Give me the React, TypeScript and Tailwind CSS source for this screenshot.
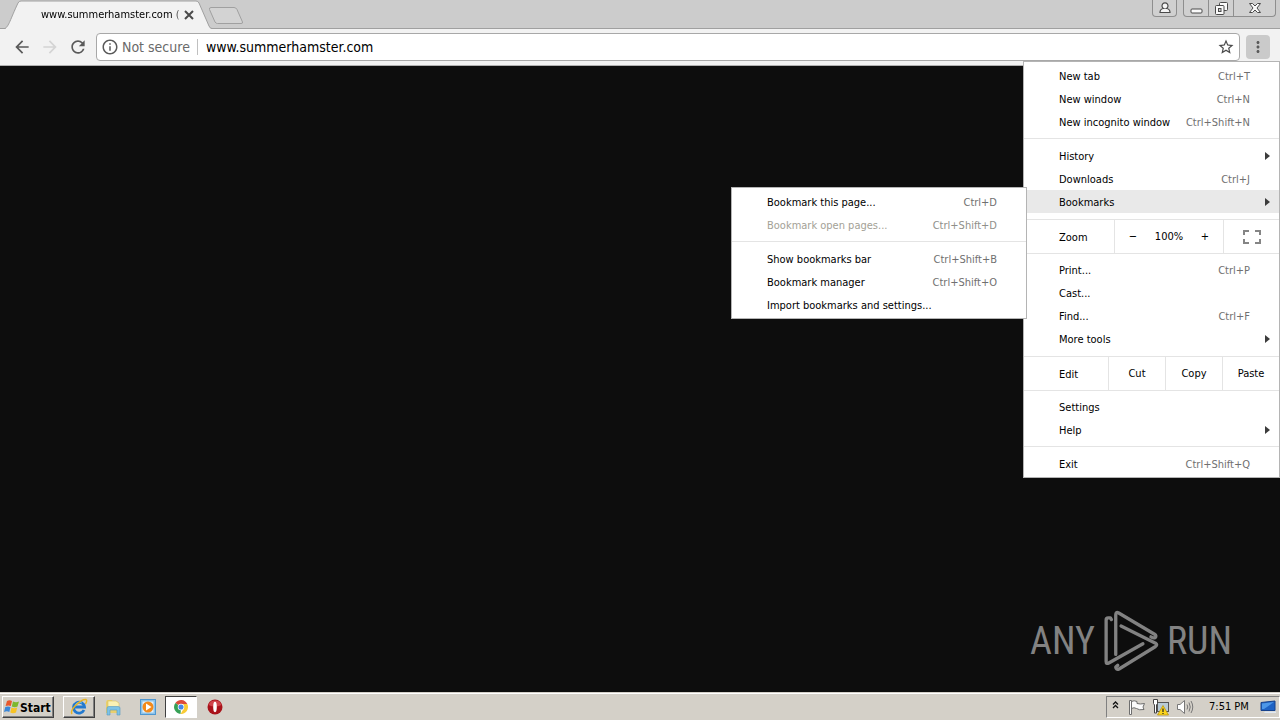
import type { ReactNode } from "react";
import {
  MdArrowBack,
  MdArrowForward,
  MdInfoOutline,
  MdMoreVert,
  MdRefresh,
  MdStarBorder,
} from "react-icons/md";

function MenuRow({
  label,
  shortcut,
  arrow,
  active,
  disabled,
}: {
  label: string;
  shortcut?: string;
  arrow?: boolean;
  active?: boolean;
  disabled?: boolean;
}) {
  return (
    <button
      type="button"
      role="menuitem"
      disabled={disabled}
      className={`flex h-[23px] w-full items-center justify-between pl-[35px] text-left whitespace-nowrap ${
        arrow ? "pr-[9px]" : "pr-[29px]"
      } ${active ? "bg-[#e9e9e9]" : ""} ${disabled ? "text-[#a3a196]" : "text-black"}`}
    >
      <span className="pt-[3px]">{label}</span>
      {shortcut && (
        <span className={`pt-[3px] ${disabled ? "text-[#8f8f8a]" : "text-[#707070]"}`}>{shortcut}</span>
      )}
      {arrow && (
        <svg viewBox="0 0 5 8" className="h-2 w-[5px]" fill="#3c3c3c" aria-hidden="true">
          <path d="M0 0 5 4 0 8z" />
        </svg>
      )}
    </button>
  );
}

function Separator() {
  return <div role="separator" className="my-[5px] h-px bg-[#e4e4e4]" />;
}

function BookmarksMenu() {
  return (
    <div
      role="menu"
      aria-label="Bookmarks"
      className="absolute -top-[3px] right-full -mr-[3px] w-[296px] border border-[#b4b4b4] bg-white py-0.5"
    >
      <MenuRow label="Bookmark this page..." shortcut="Ctrl+D" />
      <MenuRow label="Bookmark open pages..." shortcut="Ctrl+Shift+D" disabled />
      <Separator />
      <MenuRow label="Show bookmarks bar" shortcut="Ctrl+Shift+B" />
      <MenuRow label="Bookmark manager" shortcut="Ctrl+Shift+O" />
      <MenuRow label="Import bookmarks and settings..." />
    </div>
  );
}

function ControlRow({ children }: { children: ReactNode }) {
  return (
    <div className="mt-1.5 mb-1 flex h-[35px] divide-x divide-[#e4e4e4] border-y border-[#e4e4e4]">
      {children}
    </div>
  );
}

function MainMenu() {
  return (
    <div
      role="menu"
      aria-label="Browser menu"
      className="absolute top-[61px] right-0 z-10 w-[257px] border border-[#b4b4b4] bg-white py-0.5 text-[11px]"
    >
      <MenuRow label="New tab" shortcut="Ctrl+T" />
      <MenuRow label="New window" shortcut="Ctrl+N" />
      <MenuRow label="New incognito window" shortcut="Ctrl+Shift+N" />
      <Separator />
      <MenuRow label="History" arrow />
      <MenuRow label="Downloads" shortcut="Ctrl+J" />
      <div className="relative">
        <MenuRow label="Bookmarks" arrow active />
        <BookmarksMenu />
      </div>
      <ControlRow>
        <span className="flex w-[91px] items-center pt-[3px] pl-[35px]">Zoom</span>
        <div className="flex flex-1 items-center justify-between px-3 pt-0.5">
          <button type="button" aria-label="Zoom out" className="w-3">
            −
          </button>
          <span>100%</span>
          <button type="button" aria-label="Zoom in" className="w-3">
            +
          </button>
        </div>
        <button type="button" aria-label="Full screen" className="flex w-[55px] items-center justify-center">
          <svg viewBox="0 0 18 14" className="h-3.5 w-[18px]" fill="none" stroke="#858585" strokeWidth="2" aria-hidden="true">
            <path d="M1 5V1h5M12 1h5v4M17 9v4h-5M6 13H1V9" />
          </svg>
        </button>
      </ControlRow>
      <MenuRow label="Print..." shortcut="Ctrl+P" />
      <MenuRow label="Cast..." />
      <MenuRow label="Find..." shortcut="Ctrl+F" />
      <MenuRow label="More tools" arrow />
      <ControlRow>
        <span className="flex flex-1 items-center pt-[3px] pl-[35px]">Edit</span>
        <button type="button" className="w-[57px] pt-0.5">Cut</button>
        <button type="button" className="w-[57px] pt-0.5">Copy</button>
        <button type="button" className="w-14 pt-0.5">Paste</button>
      </ControlRow>
      <MenuRow label="Settings" />
      <MenuRow label="Help" arrow />
      <Separator />
      <MenuRow label="Exit" shortcut="Ctrl+Shift+Q" />
    </div>
  );
}

function TabStrip() {
  return (
    <div className="flex h-[29px] items-start justify-between border-b border-[#a0a0a0] bg-[#cccccc]">
      <div className="flex items-start">
        <div className="relative h-[29px] w-[216px]">
          <svg viewBox="0 0 216 29" className="absolute inset-0 h-[29px] w-[216px]" aria-hidden="true">
            <path d="M5 29C9 26 10 20 18 3Q19 1 21 1H196Q198 1 199 3L209 26Q210 29 212 29z" fill="#f2f2f2" />
            <path d="M5 28.500C9 26 10 20 18 3Q19 1 21 1H196Q198 1 199 3L209 26Q210 28.500 212 28.500" fill="none" stroke="#a0a0a0" />
          </svg>
          <div className="relative flex h-[29px] items-center pl-[41px]">
            <span className="w-[141px] pt-0.5 text-[11px] whitespace-nowrap text-black [mask-image:linear-gradient(to_right,black_92%,#0006)]">
              www.summerhamster.com (
            </span>
            <button type="button" aria-label="Close tab" className="ml-0.5 pt-px">
              <svg viewBox="0 0 10 10" className="size-[10px]" stroke="#4a4a4a" strokeWidth="2" aria-hidden="true">
                <path d="M1 1 9 9M9 1 1 9" />
              </svg>
            </button>
          </div>
        </div>
        <button type="button" aria-label="New tab" className="-ml-2 pt-[7px]">
          <svg viewBox="0 0 36 18" className="h-[18px] w-9" fill="#d3d3d3" stroke="#a0a0a0" aria-hidden="true">
            <path d="M3 .5H26Q28 .5 29 2.500L34.500 15Q35 16.500 33 16.500H9.500Q8 16.500 7 15L1.500 2.500Q1 .5 3 .5z" />
          </svg>
        </button>
      </div>
      <div className="flex gap-1.5 pr-1">
        <button
          type="button"
          aria-label="User profile"
          className="flex h-[17px] w-[25px] justify-center rounded-b border border-t-0 border-[#8e8e8e] bg-[#d0d0d0] pt-0.5"
        >
          <svg viewBox="0 0 12 12" className="size-3" fill="#f4f4f4" stroke="#4a4a4a" strokeWidth="1.200" aria-hidden="true">
            <path d="M1 10.500Q1 7 4.500 6.500A3 3 0 1 1 7.500 6.500Q11 7 11 10.500z" />
          </svg>
        </button>
        <div className="flex h-[17px] divide-x divide-[#8e8e8e] rounded-b border border-t-0 border-[#8e8e8e] bg-[#d0d0d0]">
          <button type="button" aria-label="Minimize" className="flex w-[25px] justify-center pt-2">
            <svg viewBox="0 0 13 6" className="h-1.5 w-[13px]" fill="#fafafa" stroke="#4a4a4a" aria-hidden="true">
              <rect x="1" y="1" width="11" height="4" rx="1" />
            </svg>
          </button>
          <button type="button" aria-label="Restore" className="flex w-[25px] justify-center pt-0.5">
            <svg viewBox="0 0 13 13" className="size-[13px]" fill="#fafafa" stroke="#4a4a4a" aria-hidden="true">
              <rect x="4.500" y=".5" width="8" height="8" rx="1" />
              <rect x=".5" y="3.500" width="8.500" height="9" rx="1" />
              <rect x="3.500" y="6.500" width="2.500" height="3" fill="#d0d0d0" />
            </svg>
          </button>
          <button type="button" aria-label="Close window" className="flex w-[41px] justify-center pt-[3px]">
            <svg viewBox="0 0 12 10" className="h-2.5 w-3" fill="#fafafa" stroke="#4a4a4a" aria-hidden="true">
              <path d="M.5.500H3.500L6 3 8.500.500H11.500L8 5 11.500 9.500H8.500L6 7 3.500 9.500H.5L4 5z" />
            </svg>
          </button>
        </div>
      </div>
    </div>
  );
}

function Toolbar() {
  return (
    <div className="flex h-[37px] items-center border-b border-[#b0b0b0] bg-[#f2f2f2] pr-2.5 pl-3 text-[#5a5a5a]">
      <button type="button" aria-label="Back" className="w-7">
        <MdArrowBack className="size-5" />
      </button>
      <button type="button" aria-label="Forward" disabled className="w-7 text-[#d4d4d4]">
        <MdArrowForward className="size-5" />
      </button>
      <button type="button" aria-label="Reload" className="w-7">
        <MdRefresh className="size-5" />
      </button>
      <div className="flex h-7 flex-1 items-center rounded-sm border border-[#a8a8a8] bg-white px-1 text-[14px]">
        <MdInfoOutline className="size-[18px]" />
        <label htmlFor="address" className="ml-[3px] border-r border-[#c0c0c0] pr-[7px] leading-4 whitespace-nowrap text-[#6a6a6a]">
          Not secure
        </label>
        <input
          id="address"
          type="text"
          defaultValue="www.summerhamster.com"
          className="min-w-0 flex-1 pl-2 text-black outline-none"
        />
        <button type="button" aria-label="Bookmark this page">
          <MdStarBorder className="size-[18px] text-[#4a4a4a]" />
        </button>
      </div>
      <button type="button" aria-label="Menu" className="ml-1.5 flex size-6 items-center justify-center rounded-sm bg-[#cacaca]">
        <MdMoreVert className="size-[18px]" />
      </button>
    </div>
  );
}

function Watermark() {
  return (
    <div
      aria-label="ANY RUN"
      className="flex items-center gap-2 font-['Roboto_Condensed','Roboto',sans-serif] text-[38px] leading-none text-[#828282]"
    >
      <span>ANY</span>
      <svg viewBox="12 10 168 190" className="h-[63px] w-14" fill="none" stroke="#828282" strokeWidth="10" strokeLinecap="round" strokeLinejoin="round" aria-hidden="true">
        <path d="M37 42 34 37H27Q21 37 21 43V168Q21 177 29 173L132 115" />
        <path d="M50 147V28Q50 17 59 22L167 86Q174 91 169 96Q164 99 156 94" />
        <path d="M66 61 170 113Q177 118 170 123L60 191Q51 195 50 185L56 180" />
      </svg>
      <span>RUN</span>
    </div>
  );
}

function StartFlag() {
  return (
    <svg viewBox="0 0 16 16" className="size-4" aria-hidden="true">
      <path d="M3 2Q5.500.500 8 2L6.800 7Q4.500 5.800 1.600 7z" fill="#e8582c" />
      <path d="M9 2.500Q12 4 15 2.500L13.500 7.500Q11 9 7.800 7.500z" fill="#7db82d" />
      <path d="M1.300 8Q4 6.800 6.500 8L5.300 13Q3 11.500 0 13z" fill="#3a87d8" />
      <path d="M7.500 8.500Q10.500 10 13.200 8.500L12 13.500Q9 15 6.300 13.500z" fill="#f7c325" />
    </svg>
  );
}

function ExplorerIcon() {
  return (
    <svg viewBox="0 0 18 18" className="size-[18px]" fill="none" aria-hidden="true">
      <path d="M14 12A5.500 5.500 0 1 1 14.500 9H5" stroke="#2279cf" strokeWidth="2.800" />
      <path d="M5 8A4.500 4.500 0 0 1 12 5" stroke="#6bc0f2" strokeWidth="1" />
      <path d="M2 16Q0 13 6 7T16 1.500Q17.500 2.500 15.500 6" stroke="#e9b422" strokeWidth="1.500" />
    </svg>
  );
}

function FolderIcon() {
  return (
    <svg viewBox="0 0 18 18" className="size-[18px]" aria-hidden="true">
      <path d="M2 4 3 2H8L9 4H14V15H2z" fill="#e9cf6d" />
      <path d="M4 3H12L15 5V10H4z" fill="#faf1b4" stroke="#d4b953" strokeWidth=".5" />
      <path d="M3 17V10Q3 8.500 5 8.500H14Q16 8.500 16 10V17H13V12H6V17z" fill="#7ec3e6" stroke="#5599c0" strokeWidth=".6" />
    </svg>
  );
}

function MediaIcon() {
  return (
    <svg viewBox="0 0 18 18" className="size-[18px]" aria-hidden="true">
      <rect x="1.500" y="1.500" width="15" height="15" fill="#8cc3ea" stroke="#4f97d0" />
      <rect x="3.500" y="3.500" width="11" height="11" fill="#e3f1fb" />
      <circle cx="9" cy="9" r="5.500" fill="#f28a1c" />
      <path d="M7 5.500 12.500 9 7 12.500z" fill="#fff" />
    </svg>
  );
}

function ChromeIcon() {
  return (
    <svg viewBox="0 0 16 16" className="size-3.5" aria-hidden="true">
      <path d="M8 8 1.500 3.500A8 8 0 0 1 15.200 4.500H8z" fill="#dd4b3a" />
      <path d="M8 8 7.500 16A8 8 0 0 1 1.500 3.500z" fill="#37a156" />
      <path d="M8 8V4.500H15.200A8 8 0 0 1 7.500 16L11 10z" fill="#f9cb35" />
      <circle cx="8" cy="8" r="3.700" fill="#fff" />
      <circle cx="8" cy="8" r="2.900" fill="#4687e8" />
    </svg>
  );
}

function OperaIcon() {
  return (
    <svg viewBox="0 0 16 16" className="size-4" aria-hidden="true">
      <circle cx="8" cy="8" r="7.500" fill="#a9121a" />
      <path d="M1.500 6A7 7 0 0 1 14.500 6Q8 9 1.500 6z" fill="#d0444b" />
      <ellipse cx="8" cy="8" rx="1.800" ry="5.200" fill="#fff" />
    </svg>
  );
}

const raised =
  "border border-t-white border-l-white border-r-[#404040] border-b-[#404040] shadow-[inset_-1px_-1px_0_#808080]";

function Taskbar() {
  return (
    <footer className="flex h-7 items-center justify-between border-t border-[#d4d0c8] bg-[#d4d0c8] pl-0.5 text-[11px] text-black shadow-[inset_0_1px_0_#ffffff]">
      <nav aria-label="Taskbar" className="flex items-center">
        <button type="button" className={`flex h-[22px] w-[52px] items-center px-px ${raised}`}>
          <StartFlag />
          <span className="pt-0.5 text-[12px] font-bold">Start</span>
        </button>
        <button type="button" aria-label="Internet Explorer" className={`ml-[9px] flex h-[22px] w-8 items-center justify-center ${raised}`}>
          <ExplorerIcon />
        </button>
        <button type="button" aria-label="File Explorer" className="flex h-[22px] w-9 items-center justify-center">
          <FolderIcon />
        </button>
        <button type="button" aria-label="Media Player" className="flex h-[22px] w-[34px] items-center justify-center">
          <MediaIcon />
        </button>
        <button
          type="button"
          aria-label="Chrome"
          className="flex h-[22px] w-8 items-center justify-center border border-t-[#404040] border-r-white border-b-white border-l-[#404040] bg-white"
        >
          <ChromeIcon />
        </button>
        <button type="button" aria-label="Opera" className="flex h-[22px] w-[35px] items-center justify-center">
          <OperaIcon />
        </button>
      </nav>
      <div className="flex h-[22px] items-center border border-t-[#808080] border-r-white border-b-white border-l-[#808080] pr-0.5 pl-[5px]">
        <button type="button" aria-label="Show hidden icons" className="mb-1">
          <svg viewBox="0 0 7 8" className="h-2 w-[7px]" fill="none" stroke="#111" strokeWidth="1.300" aria-hidden="true">
            <path d="M1 3.500 3.500 1 6 3.500M1 7 3.500 4.500 6 7" />
          </svg>
        </button>
        <svg viewBox="0 0 18 16" className="ml-[9px] h-4 w-[18px]" fill="#fbfbfb" stroke="#6e6e6e" aria-hidden="true">
          <path d="M3.500 2.500Q6 1 9 2.500V4.500Q12 5.500 16.500 4.500L15 8 16 10.500Q11 11.500 8.500 9.500 6 8 3.500 9.500z" />
          <path d="M1.500 1.500H3.500V15.500H1.500z" />
        </svg>
        <svg viewBox="0 0 18 18" className="ml-1.5 size-[18px]" aria-hidden="true">
          <rect x="5.500" y="4.500" width="11" height="9" fill="#b9cbd6" stroke="#555" />
          <path d="M8 14H14V16H8z" fill="#777" />
          <path d="M1.500 1.500H5.500V5.500L4.500 7V15H2.500V7L1.500 5.500z" fill="#fff" stroke="#444" />
          <path d="M11 7.500 16.500 17H5.500z" fill="#fbd51c" stroke="#b58d00" strokeWidth=".7" />
          <path d="M11 10.500V14M11 15V16" stroke="#222" strokeWidth="1.200" />
        </svg>
        <svg viewBox="0 0 18 16" className="ml-1.5 h-4 w-[18px]" fill="none" stroke="#777" aria-hidden="true">
          <path d="M1.500 5.500H4L8.500 1.500V14.500L4 10.500H1.500z" fill="#fff" />
          <path d="M11 5.500Q12.500 8 11 10.500M13 3.500Q15.500 8 13 12.500M15 2Q18.500 8 15 14" />
        </svg>
        <time className="ml-[15px] w-[47px] pt-0.5 whitespace-nowrap">7:51 PM</time>
        <svg viewBox="0 0 17 14" className="ml-1 h-3.5 w-[17px]" aria-hidden="true">
          <path d="M1 2.500 15 1V10.500H1z" fill="#1e62c4" stroke="#16428c" />
          <path d="M2 3.500 14 2 4 9H2z" fill="#4d97e8" />
          <path d="M5 11.500H16V13H4z" fill="#dfe8f2" />
        </svg>
      </div>
    </footer>
  );
}

export default function App() {
  return (
    <div className="relative flex min-h-screen flex-col bg-[#0d0d0d] font-['DejaVu_Sans_Condensed','DejaVu_Sans',sans-serif]">
      <header>
        <TabStrip />
        <Toolbar />
      </header>
      <MainMenu />
      <main className="flex flex-1 items-end justify-end pr-12 pb-5">
        <Watermark />
      </main>
      <Taskbar />
    </div>
  );
}
